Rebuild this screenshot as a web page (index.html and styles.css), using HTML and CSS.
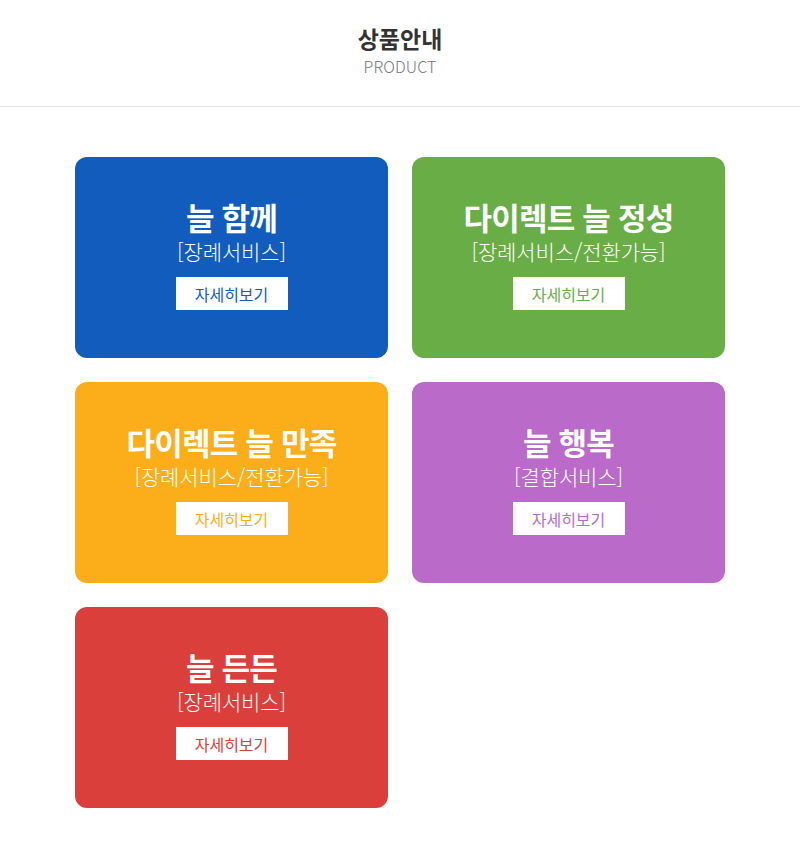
FILE: index.html
```html
<!DOCTYPE html>
<html lang="ko">
<head>
<meta charset="utf-8">
<link rel="stylesheet" href="styles.css">
</head>
<body>
<header class="page-head">
  <h1 class="page-title">상품안내</h1>
  <p class="page-sub">PRODUCT</p>
</header>
<main class="grid">
  <div class="card blue">
    <h2 class="card-title">늘 함께</h2>
    <p class="card-sub">[장례서비스]</p>
    <a class="card-btn">자세히보기</a>
  </div>
  <div class="card green">
    <h2 class="card-title">다이렉트 늘 정성</h2>
    <p class="card-sub">[장례서비스/전환가능]</p>
    <a class="card-btn">자세히보기</a>
  </div>
  <div class="card orange">
    <h2 class="card-title">다이렉트 늘 만족</h2>
    <p class="card-sub">[장례서비스/전환가능]</p>
    <a class="card-btn">자세히보기</a>
  </div>
  <div class="card purple">
    <h2 class="card-title">늘 행복</h2>
    <p class="card-sub">[결합서비스]</p>
    <a class="card-btn">자세히보기</a>
  </div>
  <div class="card red">
    <h2 class="card-title">늘 든든</h2>
    <p class="card-sub">[장례서비스]</p>
    <a class="card-btn">자세히보기</a>
  </div>
</main>
</body>
</html>
```
FILE: styles.css
```css
* { box-sizing: border-box; }
body {
  margin: 0;
  background: #fff;
  font-family: "Noto Sans CJK KR", "Noto Sans", sans-serif;
}
.page-head {
  height: 107px;
  border-bottom: 1px solid #e3e3e3;
  display: flex;
  flex-direction: column;
  align-items: center;
  padding-top: 22px;
}
.page-title {
  margin: 0;
  font-size: 23px;
  line-height: 32px;
  font-weight: 700;
  color: #333;
}
.page-sub {
  margin: 2px 0 0;
  font-size: 16px;
  line-height: 20px;
  font-weight: 300;
  color: #777;
  letter-spacing: 0.1px;
}
.grid {
  display: grid;
  grid-template-columns: 313px 313px;
  gap: 24px;
  justify-content: center;
  padding-top: 50px;
  padding-bottom: 40px;
}
.card {
  height: 201px;
  border-radius: 12px;
  display: flex;
  flex-direction: column;
  align-items: center;
  justify-content: flex-start;
  color: #fff;
  padding-top: 44px;
}
.card-title {
  margin: 0 0 4px;
  font-size: 31px;
  line-height: 32px;
  font-weight: 700;
  letter-spacing: -0.8px;
}
.card-sub {
  margin: 0;
  font-size: 21px;
  line-height: 28px;
  font-weight: 300;
  letter-spacing: -0.1px;
}
.card-btn {
  margin-top: 12px;
  width: 112px;
  height: 33px;
  background: #fff;
  display: flex;
  align-items: center;
  justify-content: center;
  font-size: 16px;
  font-weight: 400;
  letter-spacing: 0;
}
.blue { background: #115cbd; }
.blue .card-btn { color: #115cbd; }
.green { background: #68ad46; }
.green .card-btn { color: #68ad46; }
.orange { background: #fcae1a; }
.orange .card-btn { color: #fcae1a; }
.purple { background: #ba6ac8; }
.purple .card-btn { color: #ba6ac8; }
.red { background: #da3f3c; }
.red .card-btn { color: #da3f3c; }
```
